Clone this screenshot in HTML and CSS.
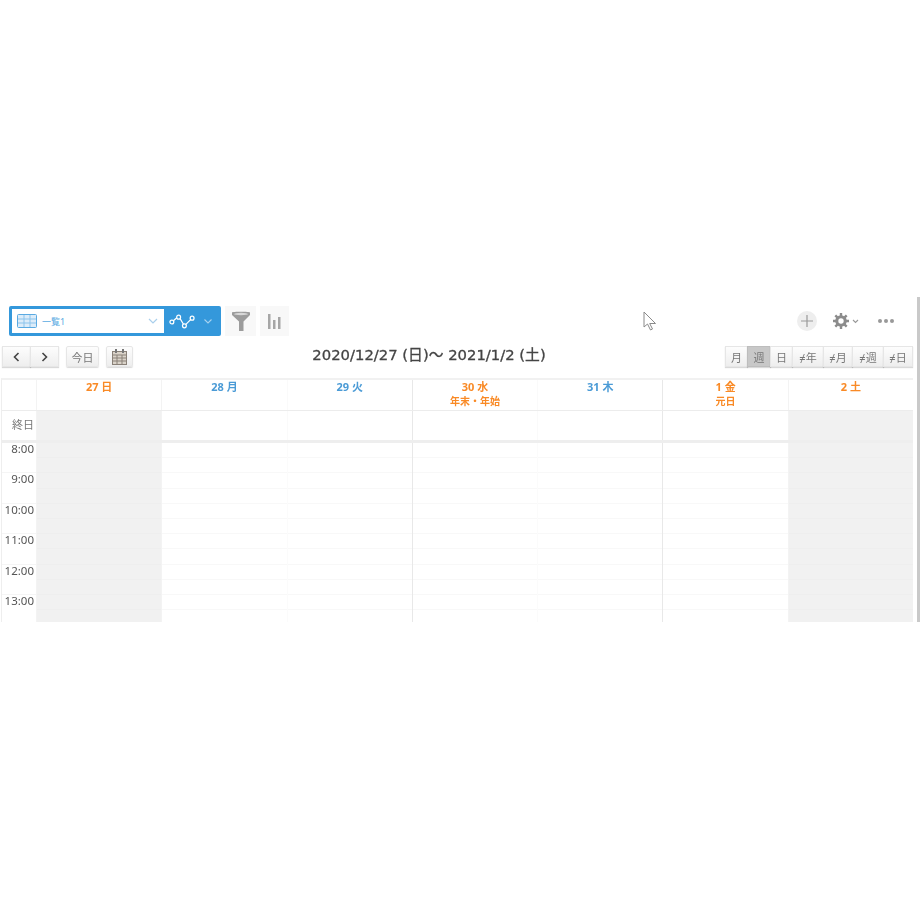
FILE: index.html
```html
<!DOCTYPE html>
<html lang="ja">
  <head>
    <meta charset="UTF-8" />
    <title>カレンダー</title>
    <link rel="stylesheet" href="styles.css">
  </head>
  <body>
    <div class="app">
      <main class="content">
        <div class="toolbar">
          <div class="view-select">
            <div class="view-name">
              <svg class="icon-table" width="20" height="14" viewBox="0 0 20 14"><rect x="0.5" y="0.5" width="19" height="13" rx="1" fill="#dcecf9" stroke="#5aaae2"/><path d="M7 1v12M13 1v12M1 5h18M1 9h18" stroke="#8cc4ec" fill="none"/></svg>
              <span class="view-label">一覧1</span>
              <svg class="chev" width="10" height="6" viewBox="0 0 10 6"><path d="M1 1l4 4 4-4" stroke="#a9cfec" stroke-width="1.2" fill="none"/></svg>
            </div>
            <div class="view-type">
              <svg width="26" height="17" viewBox="0 0 27 17"><path d="M3 9l7-6 6 10 8-8" stroke="#fff" stroke-width="1.3" fill="none"/><g fill="#3498db" stroke="#fff" stroke-width="1.3"><circle cx="3" cy="9" r="2"/><circle cx="10" cy="4" r="2"/><circle cx="16" cy="13" r="2"/><circle cx="24" cy="5" r="2"/></g></svg>
              <svg class="chev" width="8" height="5" viewBox="0 0 8 5"><path d="M.5.5L4 4 7.500.5" stroke="#a6d2f0" stroke-width="1.100" fill="none"/></svg>
            </div>
          </div>
          <button class="tool-btn filter-btn">
            <svg width="18" height="20" viewBox="0 0 18 20"><path d="M0 1.5C0 .5 18 .5 18 1.5V4l-6.500 6.500V20H7V10.500L0 4z" fill="#9c9c9c"/><ellipse cx="9" cy="3" rx="7" ry="1.200" fill="#d8d8d8"/></svg>
          </button>
          <button class="tool-btn chart-btn">
            <svg width="13" height="15" viewBox="0 0 13 15"><path d="M0 0h2.500v15H0zM5 6h2.500v9H5zM10 3h2.500v12H10z" fill="#a6a6a6"/></svg>
          </button>
          <svg class="cursor" width="14" height="20" viewBox="0 0 14 20"><path d="M1 1v15l3.500-3 3 6 2-1-2.800-5.500H12.500z" fill="#fff" stroke="#8a8a8a"/></svg>
          <div class="toolbar-right">
            <span class="add-btn"><svg width="12" height="12" viewBox="0 0 12 12"><path d="M6 0v12M0 6h12" stroke="#999" stroke-width="1.200"/></svg></span>
            <svg class="gear" width="16" height="16" viewBox="0 0 16 16"><circle cx="8" cy="8" r="4.300" fill="none" stroke="#8c8c8c" stroke-width="3"/><path d="M8 0v16M0 8h16M2.300 2.300l11.400 11.400M13.700 2.300L2.300 13.700" stroke="#8c8c8c" stroke-width="2.400"/><circle cx="8" cy="8" r="2.700" fill="#fff"/></svg>
            <svg class="chev gear-chev" width="7" height="5" viewBox="0 0 7 5"><path d="M1 1l2.500 2.500L6 1" stroke="#999" stroke-width="1.100" fill="none"/></svg>
            <span class="dots"><i></i><i></i><i></i></span>
          </div>
        </div>

        <div class="cal-nav">
          <div class="btn-group">
            <button class="btn nav-btn"><svg width="7" height="10" viewBox="0 0 7 10"><path d="M5.500 1l-4 4 4 4" stroke="#444" stroke-width="1.600" fill="none"/></svg></button>
            <button class="btn nav-btn"><svg width="7" height="10" viewBox="0 0 7 10"><path d="M1.500 1l4 4-4 4" stroke="#444" stroke-width="1.600" fill="none"/></svg></button>
          </div>
          <button class="btn today-btn">今日</button>
          <button class="btn picker-btn">
            <svg width="15" height="16" viewBox="0 0 15 16"><rect x="0.500" y="2.500" width="14" height="13" fill="#d9d2c8" stroke="#8a8178"/><path d="M0 6h15M5 6v9M10 6v9M1 9h13M1 12h13" stroke="#8a8178" fill="none"/><path d="M4 0v4M11 0v4" stroke="#777" stroke-width="2"/></svg>
          </button>
          <h1 class="cal-title">2020/12/27 (日)～ 2021/1/2 (土)</h1>
          <div class="btn-group range-group">
            <button class="btn range-btn r-month">月</button>
            <button class="btn range-btn r-week active">週</button>
            <button class="btn range-btn r-day">日</button>
            <button class="btn range-btn r-wide">≠年</button>
            <button class="btn range-btn r-mid">≠月</button>
            <button class="btn range-btn r-wide">≠週</button>
            <button class="btn range-btn r-mid">≠日</button>
          </div>
        </div>

        <div class="calendar">
          <div class="cal-row head-row">
            <div class="cell time-cell"></div>
            <div class="cell head-cell orange">27 日</div>
            <div class="cell head-cell blue">28 月</div>
            <div class="cell head-cell blue faint">29 火</div>
            <div class="cell head-cell orange strong">30 水<small>年末・年始</small></div>
            <div class="cell head-cell blue faint">31 木</div>
            <div class="cell head-cell orange strong">1 金<small>元日</small></div>
            <div class="cell head-cell orange">2 土</div>
          </div>
          <div class="cal-row allday-row">
            <div class="cell time-cell allday-label">終日</div>
            <div class="cell off"></div>
            <div class="cell"></div>
            <div class="cell faint"></div>
            <div class="cell strong"></div>
            <div class="cell faint"></div>
            <div class="cell strong"></div>
            <div class="cell off"></div>
          </div>
          <div class="cal-row hours-row">
            <div class="time-col">
              <div class="hour">8:00</div>
              <div class="hour">9:00</div>
              <div class="hour">10:00</div>
              <div class="hour">11:00</div>
              <div class="hour">12:00</div>
              <div class="hour">13:00</div>
            </div>
            <div class="day-col off"></div>
            <div class="day-col"></div>
            <div class="day-col faint"></div>
            <div class="day-col strong"></div>
            <div class="day-col faint"></div>
            <div class="day-col strong"></div>
            <div class="day-col off"></div>
          </div>
        </div>
      </main>
      <div class="scrollbar"></div>
    </div>
  </body>
</html>
```

FILE: styles.css
```css
* {
  margin: 0;
  padding: 0;
  box-sizing: border-box;
  font-family: "Noto Sans", "Noto Sans CJK JP", sans-serif;
}

body {
  background-color: white;
  color: #444;
  padding-top: 297px;
}

.app {
  display: flex;
  height: 325px;
  overflow: hidden;
  filter: blur(0.4px);
}

.content {
  flex: 1;
  min-width: 0;
}

.scrollbar {
  width: 3px;
  background-color: #c9c9c9;
}

/* top toolbar */
.toolbar {
  display: flex;
  align-items: center;
  height: 30px;
  margin-top: 9px;
  padding-left: 9px;
}

.view-select {
  display: flex;
  width: 212px;
  height: 30px;
  background-color: #3498db;
  border-radius: 2px;
  padding: 3px 0 3px 3px;
}

.view-name {
  display: flex;
  align-items: center;
  width: 152px;
  background-color: white;
  padding: 0 6px 0 5px;
}

.view-label {
  flex: 1;
  margin-left: 5px;
  font-size: 9px;
  color: #5aaae2;
}

.view-type {
  flex: 1;
  display: flex;
  align-items: center;
  padding-left: 5px;
  gap: 9px;
}

.tool-btn {
  display: flex;
  align-items: center;
  justify-content: center;
  height: 30px;
  border: none;
  background-color: #f8f8f8;
}

.filter-btn {
  width: 31px;
  margin-left: 4px;
}

.chart-btn {
  width: 29px;
  margin-left: 4px;
}

.cursor {
  margin-left: 354px;
}

.toolbar-right {
  display: flex;
  align-items: center;
  margin-left: 140px;
}

.add-btn {
  display: flex;
  align-items: center;
  justify-content: center;
  width: 20px;
  height: 20px;
  border-radius: 50%;
  background-color: #eee;
}

.gear {
  margin-left: 16px;
}

.gear-chev {
  margin-left: 3px;
}

.dots {
  display: flex;
  gap: 2px;
  margin-left: 19px;
}

.dots i {
  width: 4px;
  height: 4px;
  border-radius: 50%;
  background-color: #999;
}

/* calendar navigation */
.cal-nav {
  display: flex;
  align-items: center;
  height: 22px;
  margin: 9px 4px 0 2px;
  padding-top: 1px;
}

.btn {
  height: 21px;
  border: 1px solid #e6e6e6;
  border-radius: 2px;
  background: linear-gradient(#fdfdfd, #eeeeee);
  box-shadow: 0 1px 1px rgba(0, 0, 0, 0.15);
  font-size: 11px;
  color: #777;
  display: flex;
  align-items: center;
  justify-content: center;
}

.btn-group {
  display: flex;
}

.btn-group .btn {
  border-radius: 0;
  margin-left: -1px;
}

.btn-group .btn:first-child {
  margin-left: 0;
}

.nav-btn {
  width: 29px;
}

.today-btn {
  width: 33px;
  margin-left: 7px;
}

.picker-btn {
  width: 27px;
  margin-left: 7px;
}

.cal-title {
  flex: 1;
  text-align: center;
  font-family: "DejaVu Sans", "Noto Sans CJK JP", sans-serif;
  font-size: 14.800px;
  font-weight: 400;
  -webkit-text-stroke: 0.3px #444;
  line-height: 20px;
  color: #444;
  padding-bottom: 3px;
}

.range-group {
  width: 188px;
}

.range-btn.r-month { width: 23px; }
.range-btn.r-week { width: 24px; }
.range-btn.r-day { width: 23px; }
.range-btn.r-wide { width: 32px; }
.range-btn.r-mid { width: 30px; }

.range-btn.active {
  background: #c8c8c8;
  border-color: #bdbdbd;
}

/* week grid */
.calendar {
  width: 912px;
  margin: 11px 0 0 1px;
  border-top: 2px solid #f1f1f1;
  border-left: 1px solid #eeeeee;
}

.cal-row {
  display: grid;
  grid-template-columns: 34px repeat(7, 1fr);
}

.cell {
  border-left: 1px solid #f3f3f3;
}

.cell.strong {
  border-left-color: #e8e8e8;
}

.cell.faint {
  border-left-color: #fafafa;
}

.time-cell {
  border-left: none;
}

.head-row {
  height: 31px;
  border-bottom: 1px solid #ececec;
}

.head-cell {
  text-align: center;
  font-size: 11px;
  font-weight: 700;
  line-height: 14px;
}

.head-cell small {
  display: block;
  font-size: 10px;
  line-height: 14px;
}

.orange { color: #f98a26; }
.blue { color: #4b9bd6; }

.allday-row {
  height: 32px;
  border-bottom: 3px solid #eeeeee;
}

.allday-label {
  text-align: right;
  padding-right: 2px;
  font-size: 11px;
  line-height: 28px;
  color: #777;
}

.off {
  background-color: #f1f1f1;
}

.hours-row {
  height: 200px;
}

.hour {
  height: 30.4px;
  margin-top: -2px;
  margin-bottom: 2px;
  padding-right: 2px;
  text-align: right;
  font-size: 11.500px;
  line-height: 15px;
  color: #555;
}

.time-col {
  background-image: repeating-linear-gradient(
    to bottom,
    transparent 0,
    transparent 29.4px,
    #f5f5f5 29.4px,
    #f5f5f5 30.4px
  );
}

.day-col {
  border-left: 1px solid #f3f3f3;
  background-image: repeating-linear-gradient(
    to bottom,
    transparent 0,
    transparent 14.2px,
    #f8f8f8 14.2px,
    #f8f8f8 15.2px
  );
}

.day-col.strong {
  border-left-color: #e8e8e8;
}

.day-col.faint {
  border-left-color: #fbfbfb;
}

.day-col.off {
  background-color: #f1f1f1;
  background-image: repeating-linear-gradient(
    to bottom,
    transparent 0,
    transparent 14.2px,
    #eeeeee 14.2px,
    #eeeeee 15.2px
  );
}
```
